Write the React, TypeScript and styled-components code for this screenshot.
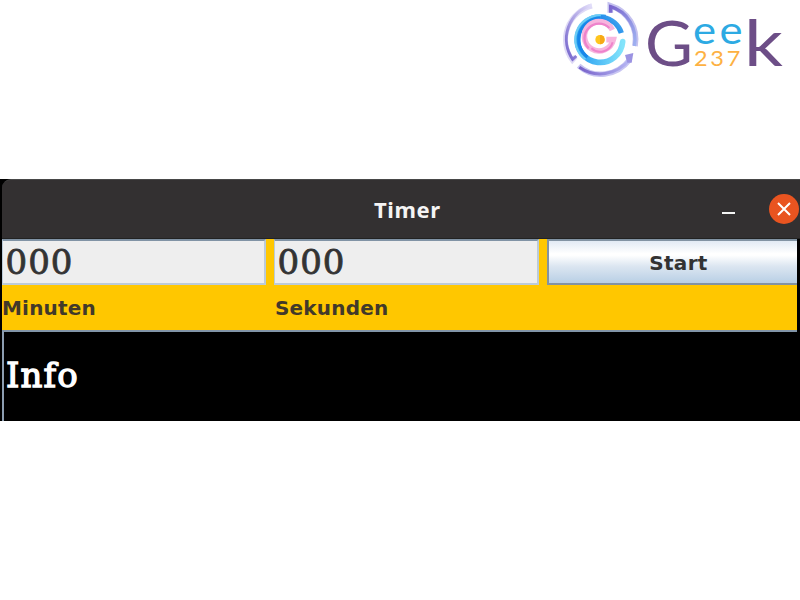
import React from "react";
import styled, { createGlobalStyle } from "styled-components";

const GlobalStyle = createGlobalStyle`
  * { box-sizing: border-box; }
  body { margin: 0; background: #fff; overflow: hidden; }
`;

const Page = styled.main`
  width: 800px;
  height: 600px;
  background: #fff;
`;

const Header = styled.header`
  display: flex;
  justify-content: flex-end;
  height: 179px;
  padding-right: 10px;
`;

const Emblem = styled.svg`
  display: block;
  width: 90px;
  height: 84px;
`;

const Wordmark = styled.svg`
  display: block;
  width: 144px;
  height: 84px;
  font-family: Lato, sans-serif;
`;

const Window = styled.section`
  height: 242px;
  background: #000;
  overflow: hidden;
`;

const TitleBar = styled.div`
  display: grid;
  grid-template-columns: 1fr 14px 30px;
  align-items: center;
  column-gap: 33px;
  height: 60px;
  margin-left: 2px;
  padding-right: 1px;
  background: #333031;
  border-top: 1px solid #484848;
  border-bottom: 1px solid #222;
  border-top-left-radius: 9px;
`;

const Title = styled.h1`
  margin: 0 0 0 372px;
  color: #f5f4f4;
  font: bold 22px/29px "Noto Sans", sans-serif;
  letter-spacing: 0.6px;
`;

const Minimize = styled.span`
  width: 13px;
  height: 2px;
  margin-top: 7px;
  background: #f4f4f4;
`;

const Close = styled.span`
  display: grid;
  place-items: center;
  width: 30px;
  height: 30px;
  margin-top: -1px;
  border-radius: 50%;
  background: #e95420;
`;

const Panel = styled.div`
  display: grid;
  grid-template-columns: 264px 265px 250px;
  grid-template-rows: 46px 45px;
  column-gap: 8px;
  width: 795px;
  margin-left: 2px;
  background: #ffc700;
`;

const Field = styled.div`
  padding-left: 2.5px;
  height: 46px;
  border: 2px solid #bccbd8;
  border-top-color: #8193a5;
  border-left-width: 1px;
  background: #eee;
  color: #333;
  font: 34px/43px "DejaVu Serif", serif;
  -webkit-text-stroke: 0.8px #333;
  letter-spacing: 1px;
`;

const StartButton = styled.div`
  height: 46px;
  padding-left: 11px;
  border: 2px solid #8293a3;
  border-right-width: 0;
  background: linear-gradient(#e2eaf4, #fff 30%, #fff 34%, #dce6f1 60%, #b8cfe5);
  color: #333;
  text-align: center;
  font: bold 20px/44px "DejaVu Sans", sans-serif;
  letter-spacing: 0.3px;
`;

const Label = styled.div<{ $indent?: number }>`
  padding-left: ${({ $indent = 0 }) => $indent}px;
  color: #42392a;
  font: bold 20px/46px "DejaVu Sans", sans-serif;
  letter-spacing: 0.2px;
`;

const InfoArea = styled.div`
  width: 795px;
  height: 100px;
  margin-left: 2px;
  padding: 22px 0 0 2px;
  border-top: 2px solid #8295a8;
  border-left: 2px solid #8c9db0;
  color: #fff;
  font: 34px/42px "DejaVu Serif", serif;
  -webkit-text-stroke: 1.3px #fff;
  letter-spacing: 1.1px;
`;

export default function App() {
  return (
    <>
      <GlobalStyle />
      <Page>
        <Header>
          <Emblem viewBox="0 0 270 252" fill="none">
            <defs>
              <linearGradient id="left" x1="1" y1="0" x2="0" y2="1">
                <stop stopColor="#e4e0fa" />
                <stop offset="1" stopColor="#7464cc" />
              </linearGradient>
              <linearGradient id="right" x1="0" y1="0" x2="1" y2="1">
                <stop stopColor="#7965cd" />
                <stop offset="1" stopColor="#9fb2f1" />
              </linearGradient>
              <linearGradient id="bottom">
                <stop stopColor="#7761c9" />
                <stop offset="1" stopColor="#b6b7f4" />
              </linearGradient>
              <linearGradient id="blue" x1="0" y1="1" x2="1" y2="0">
                <stop stopColor="#0877e7" />
                <stop offset="1" stopColor="#57b5f1" />
              </linearGradient>
              <linearGradient id="cyan" x1="0" y1="0" x2="1" y2="0">
                <stop stopColor="#249bf0" />
                <stop offset="1" stopColor="#83e4fb" />
              </linearGradient>
            </defs>
            <path d="M108 18A104 104 0 0 0 49 181L59 170" stroke="#ded9f6" strokeWidth="15" />
            <path d="M107 15A107 107 0 0 0 50 178L61 168" stroke="url(#left)" strokeWidth="9" />
            <path d="M163 38V17A106 106 0 0 1 237 138" stroke="#c4c1ef" strokeWidth="17" />
            <path d="M164 38V20A102 102 0 0 1 235 138" stroke="url(#right)" strokeWidth="10" />
            <path d="M68 197C112 237 182 230 222 178" stroke="#c8c5f2" strokeWidth="16" />
            <path d="M70 202C118 235 180 227 222 178" stroke="url(#bottom)" strokeWidth="9" />
            <path d="M207 165L232 159L227 188L214 188Z" fill="#9b93e2" />
            <path d="M142 52A68 68 0 1 0 200 125" stroke="url(#cyan)" strokeWidth="17" strokeLinecap="round" />
            <path d="M142 44V53A69 69 0 0 1 196 99" stroke="url(#blue)" strokeWidth="16" />
            <path d="M134 46A73 73 0 0 0 88 178" stroke="#6cccf5" strokeWidth="7" />
            <path d="M134 53A66 66 0 0 0 94 171" stroke="#1687ea" strokeWidth="9" />
            <path d="M169 90A44 44 0 1 0 172 119H151" stroke="#f7b5de" strokeWidth="17" />
            <path d="M160 84A43 43 0 0 0 98 145" stroke="#ee83cb" strokeWidth="7" />
            <path d="M106 145A39 39 0 0 0 170 127" stroke="#ee83cb" strokeWidth="6" />
            <circle cx="132" cy="119" r="14" fill="#ffc51d" />
            <path d="M132 105A14 14 0 0 1 132 133Z" fill="#f6a817" />
          </Emblem>
          <Wordmark viewBox="646 0 144 84">
            <text x="645" y="66" fontSize="62" fill="#6d4e87" textLength="48" lengthAdjust="spacingAndGlyphs">G</text>
            <text x="693" y="44" fontSize="38" fill="#2daae3" textLength="53" lengthAdjust="spacingAndGlyphs" letterSpacing="3">ee</text>
            <text x="694" y="66" fontSize="21.5" fill="#fdb142" textLength="49" lengthAdjust="spacingAndGlyphs" letterSpacing="2.5">237</text>
            <text x="744" y="66" fontSize="63" fill="#6d4e87" textLength="39" lengthAdjust="spacingAndGlyphs">k</text>
          </Wordmark>
        </Header>
        <Window>
          <TitleBar>
            <Title>Timer</Title>
            <Minimize />
            <Close>
              <svg width="14" height="14" viewBox="0 0 14 14">
                <path d="M1 1L13 13M13 1L1 13" stroke="#fff" strokeWidth="2" />
              </svg>
            </Close>
          </TitleBar>
          <Panel>
            <Field>000</Field>
            <Field>000</Field>
            <StartButton>Start</StartButton>
            <Label>Minuten</Label>
            <Label $indent={1}>Sekunden</Label>
          </Panel>
          <InfoArea>Info</InfoArea>
        </Window>
      </Page>
    </>
  );
}
